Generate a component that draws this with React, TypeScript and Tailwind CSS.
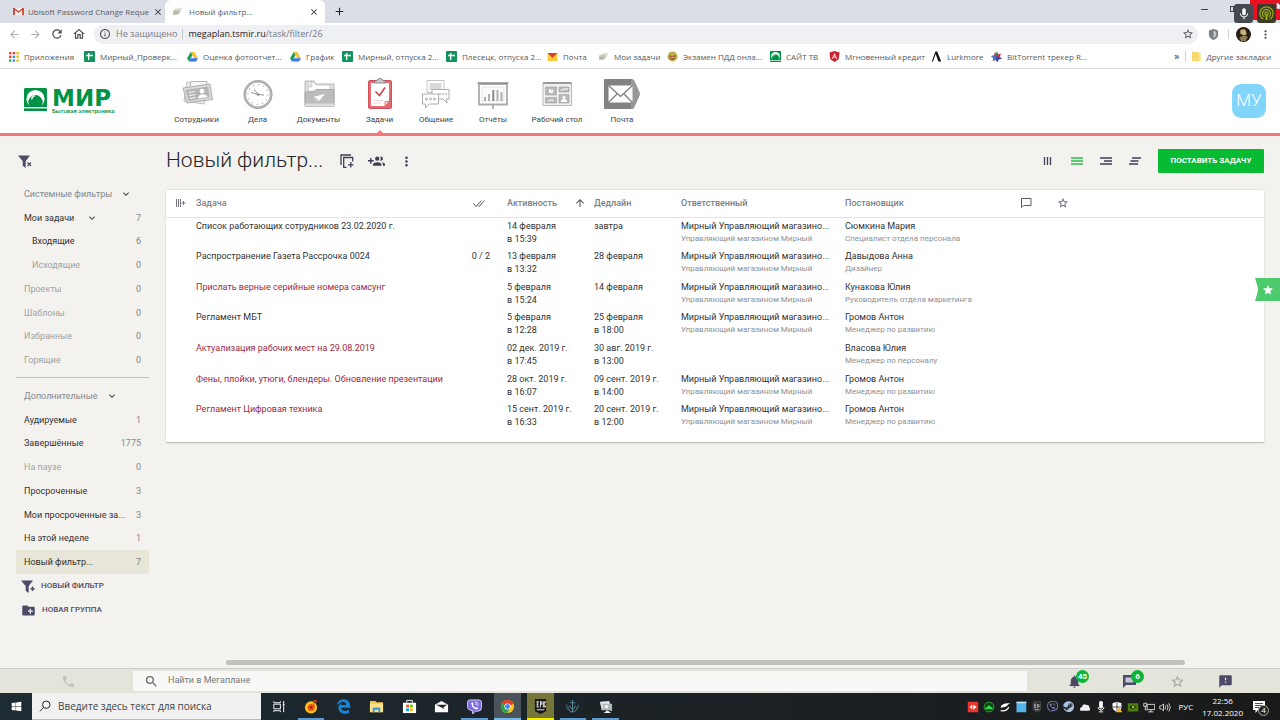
import React from "react";
import {
  MdArrowBack, MdArrowForward, MdRefresh, MdOutlineHome, MdInfoOutline, MdStarBorder, MdStar, MdMoreVert, MdClose, MdAdd,
  MdExpandMore, MdArrowUpward, MdPhone, MdSearch, MdNotifications, MdFeedback, MdCreateNewFolder, MdMic,
} from "react-icons/md";
import { FaWindows, FaEdgeLegacy, FaViber, FaSteam } from "react-icons/fa";

const chromeFont = "font-['Open_Sans','Noto_Sans',sans-serif]";

/* ---------- small coloured icons ---------- */

const Gmail = () => (
  <svg viewBox="0 0 12 10" className="h-[9px] w-[11px] shrink-0">
    <path d="M1 1h10v8H1z" fill="#f3f3f3" />
    <path d="M0 9V1h1.5L6 4.8 10.5 1H12v8h-2V3.4L6 6.6 2 3.4V9z" fill="#d23f31" />
  </svg>
);
const Papers = () => (
  <svg viewBox="0 0 12 12" className="size-[11px] shrink-0">
    <path d="M3 3l8-1-2 6-8 1z" fill="#dcdcd4" />
    <path d="M1 5l8-1-2 5-6 1z" fill="#c3c8b9" />
    <path d="M2 7h5M2 8.500h4" stroke="#9aa393" strokeWidth=".6" />
  </svg>
);
const AppsGrid = () => (
  <svg viewBox="0 0 10 10" className="size-[10px] shrink-0">
    {["#e94335", "#e94335", "#fbbc05", "#e94335", "#4285f4", "#fbbc05", "#34a853", "#4285f4", "#fbbc05"].map((c, i) => (
      <rect key={i} x={(i % 3) * 3.7} y={Math.floor(i / 3) * 3.7} width="2.400" height="2.400" fill={c} />
    ))}
  </svg>
);
const Sheet = () => (
  <svg viewBox="0 0 11 11" className="size-[11px] shrink-0">
    <rect width="11" height="11" rx="1" fill="#12945c" />
    <path d="M2 4.500h7M4.700 2v7" stroke="#fff" strokeWidth="1.300" />
  </svg>
);
const Drive = () => (
  <svg viewBox="0 0 12 11" className="h-[10px] w-[11px] shrink-0">
    <path d="M4 0h4l4 7H8z" fill="#fbc02d" />
    <path d="M4 0l2 3.500L2 10.500 0 7z" fill="#1e9e58" />
    <path d="M3.900 7H12l-2 3.500H2z" fill="#3b78e7" />
  </svg>
);
const YaMail = () => (
  <svg viewBox="0 0 11 9" className="h-[8px] w-[11px] shrink-0">
    <path d="M0 0h11v9H0z" fill="#fccb38" />
    <path d="M0 0h11L5.500 5.500z" fill="#e23b2e" />
  </svg>
);
const Emblem = () => (
  <svg viewBox="0 0 12 12" className="size-[11px] shrink-0">
    <circle cx="6" cy="6" r="5.500" fill="#c2ab50" />
    <path d="M3 4l3 2 3-2v4L6 10 3 8z" fill="#8a5a38" />
    <path d="M4 7h4" stroke="#e8d48a" />
  </svg>
);
const MirMark = ({ className }: { className: string }) => (
  <svg viewBox="0 0 24 24" className={className}>
    <path d="M1.500 0h21Q24 0 24 1.500V20H0V1.500Q0 0 1.500 0z" fill="#009245" />
    <circle cx="12" cy="11.500" r="9.500" fill="#fff" />
    <path d="M6.500 20a7.500 7.500 0 1 1 11 0z" fill="#009245" />
    <path d="M8 12a4.500 4.500 0 0 1 3.500-4" stroke="#fff" strokeWidth="1.300" fill="none" />
    <path d="M0 20h24v1.300H0z" fill="#fff" />
    <path d="M0 21.300h24V24H0z" fill="#009245" />
  </svg>
);
const Shield = () => (
  <svg viewBox="0 0 11 12" className="size-[11px] shrink-0">
    <path d="M5.500 0L11 1.500 10 9l-4.500 3L1 9 0 1.500z" fill="#cf2030" />
    <path d="M3.300 8.500L5.500 3l2.200 5.500M4.200 6.700h2.600" stroke="#fff" strokeWidth="1" fill="none" />
  </svg>
);
const Lambda = () => (
  <svg viewBox="0 0 11 11" className="size-[11px] shrink-0">
    <path d="M.8 10.500L4.400.5h1.800l4 10H7.400L4.700 3 2 10.500z" fill="#111" />
  </svg>
);
const Pinwheel = () => (
  <svg viewBox="0 0 12 12" className="size-[11px] shrink-0">
    <path d="M6.500 0l1 3.500 3.500-.5-1.500 3L12 8.500 8.500 9 7 12 5 9.500 2 11l.5-3.500L0 5.500l3.500-.8L4 1.500l2 1z" fill="#d22752" />
    <path d="M6.500 0l1 3.500L6 6 4 1.500l2 1z" fill="#21a34a" />
    <path d="M6 6L0 5.500l2.500 2L2 11l3-1.500z" fill="#2c7fe0" />
    <path d="M6 6l-1 3.500L7 12l1.500-3L12 8.500z" fill="#2e4ab0" />
  </svg>
);
const Folder = () => (
  <svg viewBox="0 0 10 12" className="h-[11px] w-[9px] shrink-0">
    <path d="M0 1h6l3 1v9H0z" fill="#f6d96f" />
    <path d="M8 2h2v9H8z" fill="#fbe9a0" />
  </svg>
);

/* ---------- browser chrome ---------- */

function TabStrip() {
  return (
    <div className="flex h-[23px] shrink-0 items-stretch bg-[#dbdee7] text-[8px] text-[#5a5d62]">
      <div className="flex w-[165px] items-center gap-[4px] pl-[13px]">
        <Gmail />
        <span className="whitespace-nowrap">Ubisoft Password Change Reque</span>
        <button aria-label="Закрыть вкладку" className="text-[#333]"><MdClose className="size-[10px]" /></button>
      </div>
      <div className="flex w-[160px] items-center gap-[6px] rounded-t-[6px] bg-white pr-[6px] pl-[7px]">
        <Papers />
        <span className="flex-1 whitespace-nowrap">Новый фильтр...</span>
        <button aria-label="Закрыть вкладку" className="text-[#333]"><MdClose className="size-[10px]" /></button>
      </div>
      <button aria-label="Новая вкладка" className="ml-[8px] text-[#222]"><MdAdd className="size-[13px]" /></button>
      <div className="ml-auto flex items-start">
        <button aria-label="Свернуть" className="mt-[9px] mr-[22px] h-px w-[7px] bg-[#444]" />
        <div className="mt-[6px] h-[6px] w-[4px] border border-[#444]" />
        <div className="relative z-10 mt-[4px] flex size-[19px] items-center justify-center rounded-[3px] bg-[#45484e] text-white">
          <MdMic className="size-[14px]" />
        </div>
        <div className="-ml-[3px] flex h-[20px] w-[30px] bg-[#e81123] pl-[7px]">
          <div className="mt-[4px] flex size-[19px] shrink-0 items-center justify-center rounded-[3px] bg-[#3d3a2c]">
            <svg viewBox="0 0 16 16" className="size-[15px]" fill="none" stroke="#a2b414" strokeWidth="1.200">
              <path d="M4.500 14A7 7 0 1 1 11.500 14M5.600 11.500a4.300 4.300 0 1 1 4.800 0" />
              <circle cx="8" cy="8" r="1.800" />
              <path d="M8 9v6" strokeWidth="2" />
            </svg>
          </div>
          <svg viewBox="0 0 6 12" className="h-[12px] w-[4px] shrink-0"><path d="M1 0v10l5 1V4z" fill="#fff" stroke="#222" strokeWidth=".5" /></svg>
        </div>
      </div>
    </div>
  );
}

function Toolbar() {
  return (
    <div className="flex h-[22px] shrink-0 items-center bg-white pl-[8px] text-[#4a4d52]">
      <div className="flex items-center gap-[8px]">
        <button aria-label="Назад" className="text-[#b0b2b5]"><MdArrowBack className="size-[13px]" /></button>
        <button aria-label="Вперёд" className="text-[#b0b2b5]"><MdArrowForward className="size-[13px]" /></button>
        <button aria-label="Обновить"><MdRefresh className="size-[14px]" /></button>
        <button aria-label="Домой"><MdOutlineHome className="size-[14px]" /></button>
      </div>
      <div className="ml-[8px] flex h-[19px] flex-1 items-center rounded-full bg-[#eff0f4] pr-[4px] pl-[5px] text-[9px]">
        <MdInfoOutline className="size-[12px]" />
        <span className="ml-[5px] text-[#777a7f]">Не защищено</span>
        <span className="mx-[5px] h-[10px] w-px bg-[#c4c6ca]" />
        <span className="flex-1 text-[#777a7f]"><span className="text-[#222]">megaplan.tsmir.ru</span>/task/filter/26</span>
        <button aria-label="В закладки"><MdStarBorder className="size-[12px]" /></button>
      </div>
      <svg viewBox="0 0 12 12" className="ml-[10px] size-[11px]">
        <path d="M6 0l5 1.500V6q0 4-5 6-5-2-5-6V1.500z" fill="#7b7e83" />
        <path d="M6 2l3 1v3q0 2-3 4z" fill="#c5c7ca" />
      </svg>
      <span className="ml-[9px] h-[10px] w-px bg-[#d0d2d6]" />
      <svg viewBox="0 0 14 14" className="ml-[7px] size-[15px]">
        <circle cx="7" cy="7" r="7" fill="#2b1d12" />
        <path d="M4 3q3-2 5 0l1 4-3 1-3-2z" fill="#c9b07a" />
        <path d="M3 10q4-3 8-1l-2 4H5z" fill="#8f7b5c" />
      </svg>
      <button aria-label="Меню браузера" className="mr-[8px] ml-[8px]"><MdMoreVert className="size-[13px]" /></button>
    </div>
  );
}

const bookmarks: { icon: React.ReactNode; text: string; w: string }[] = [
  { icon: <AppsGrid />, text: "Приложения", w: "w-[75px]" },
  { icon: <Sheet />, text: "Мирный_Проверк...", w: "w-[103px]" },
  { icon: <Drive />, text: "Оценка фотоотчет...", w: "w-[103px]" },
  { icon: <Drive />, text: "График", w: "w-[52px]" },
  { icon: <Sheet />, text: "Мирный, отпуска 2...", w: "w-[104px]" },
  { icon: <Sheet />, text: "Плесецк, отпуска 2...", w: "w-[101px]" },
  { icon: <YaMail />, text: "Почта", w: "w-[51px]" },
  { icon: <Papers />, text: "Мои задачи", w: "w-[69px]" },
  { icon: <Emblem />, text: "Экзамен ПДД онла...", w: "w-[103px]" },
  { icon: <MirMark className="size-[11px] shrink-0" />, text: "САЙТ ТВ", w: "w-[59px]" },
  { icon: <Shield />, text: "Мгновенный кредит", w: "w-[102px]" },
  { icon: <Lambda />, text: "Lurkmore", w: "w-[60px]" },
  { icon: <Pinwheel />, text: "BitTorrent трекер R...", w: "w-[100px]" },
];

function Bookmarks() {
  return (
    <div className="flex h-[24px] shrink-0 items-center border-b border-[#dcdcdc] bg-white pr-[9px] pl-[9px] text-[8px] whitespace-nowrap text-[#55585d]">
      {bookmarks.map((b) => (
        <a key={b.text} href="#" className={`flex shrink-0 items-center gap-[5px] ${b.w}`}>
          {b.icon}
          {b.text}
        </a>
      ))}
      <button className="ml-auto text-[10px] text-[#333]">»</button>
      <span className="mx-[6px] h-[11px] w-px bg-[#d0d2d6]" />
      <a href="#" className="flex items-center gap-[5px]"><Folder />Другие закладки</a>
    </div>
  );
}

/* ---------- application header ---------- */

const nav: { label: string; w: string; active?: boolean; icon: React.ReactNode }[] = [
  {
    label: "Сотрудники", w: "w-[61px]",
    icon: (
      <>
        <path d="M8 4l20 3-3 19L5 23z" fill="#efefef" stroke="#b0b0b0" strokeWidth=".8" />
        <path d="M12 3.500l16 0-1 6-17 3z" fill="#f7f7f7" stroke="#a5a5a5" strokeWidth=".8" />
        <path d="M4 10l27-4 2.500 15.500L8 25z" fill="#dadada" stroke="#a0a0a0" strokeWidth=".8" />
        <path d="M6.500 12l22.500-3.500 1.700 11L9.800 23z" fill="#b5b5b5" />
        <path d="M9.500 14.500l6.500-1M10 17.500l6.500-1M10.500 20.500l6.500-1" stroke="#f4f4f4" strokeWidth="1.200" />
        <circle cx="23" cy="13.200" r="2.400" fill="#fff" />
        <path d="M19 20.500q.5-4 4.500-4.200t5.200 2.800z" fill="#fff" />
      </>
    ),
  },
  {
    label: "Дела", w: "w-[61px]",
    icon: (
      <>
        <circle cx="18" cy="16.500" r="13" fill="#fff" stroke="#b5b5b5" strokeWidth="2.400" />
        <circle cx="18" cy="16.500" r="14.200" fill="none" stroke="#999" strokeWidth=".7" />
        <circle cx="18" cy="16.500" r="10" fill="none" stroke="#999" strokeWidth="1.200" strokeDasharray="1 4.236" />
        <path d="M11 14.500l7 2-4-5.500M18 16.500l6 .5" fill="none" stroke="#888" strokeWidth=".9" />
        <circle cx="18" cy="16.500" r="1.200" fill="#888" />
      </>
    ),
  },
  {
    label: "Документы", w: "w-[61px]",
    icon: (
      <>
        <path d="M4 28V3h9l2 3h18v22z" fill="#e2e2e2" stroke="#a8a8a8" strokeWidth=".8" />
        <path d="M7 4h6l2 3h14v6H7z" fill="#fff" stroke="#c0c0c0" strokeWidth=".8" />
        <path d="M7 9l4-5v5z" fill="#e4e4e4" stroke="#c0c0c0" strokeWidth=".6" />
        <path d="M4 14h9l2-2.500h18V28H4z" fill="#bcbcbc" stroke="#a0a0a0" strokeWidth=".8" />
        <path d="M4 25.500h29V28H4z" fill="#dcdcdc" />
        <path d="M12 19l12-3-6 7-2-2.500zM14.500 21.500l1.700 2v-2z" fill="#fff" />
      </>
    ),
  },
  {
    label: "Задачи", w: "w-[61px]", active: true,
    icon: (
      <>
        <rect x="6.500" y="2.500" width="23" height="28" rx="1.500" fill="#e36c72" stroke="#cf5059" />
        <path d="M9 5h18v18l-4 5H9z" fill="#fff" />
        <path d="M23 28v-4.500h4z" fill="#fbe3e3" stroke="#e0606a" strokeWidth=".8" />
        <path d="M13.500 13.500l4 4 5.500-8" fill="none" stroke="#d23f4d" strokeWidth="1.500" />
        <path d="M11 22.500h10M11 25h8" stroke="#e8cccc" strokeWidth=".8" />
        <path d="M12 5q0-2.500 3-2.500Q15.500.5 18 .5t3 2q3 0 3 2.500z" fill="#c9c9c9" stroke="#777" strokeWidth=".8" />
      </>
    ),
  },
  {
    label: "Общение", w: "w-[52px]",
    icon: (
      <>
        <path d="M9 2.500h17v12H9z" fill="#fff" stroke="#b5b5b5" strokeWidth=".8" />
        <path d="M11.500 5h12v7h-12z" fill="#d9d9d9" />
        <path d="M14 11.500h17V21h-2.500l.5 4-4-4H14z" fill="#fff" stroke="#a5a5a5" strokeWidth=".9" />
        <path d="M22 15v2M25 15v2M28 15v2" stroke="#999" strokeWidth="1.100" />
        <path d="M4.500 16h16v10H11l-3.500 4v-4h-3z" fill="#fff" stroke="#a5a5a5" strokeWidth=".9" />
        <g fill="none" stroke="#999" strokeWidth=".8"><circle cx="8.500" cy="21" r="1" /><circle cx="12.500" cy="21" r="1" /><circle cx="16.500" cy="21" r="1" /></g>
      </>
    ),
  },
  {
    label: "Отчёты", w: "w-[62px]",
    icon: (
      <>
        <path d="M4 6h28v20.500H4z" fill="#fff" stroke="#acacac" strokeWidth="1.800" />
        <path d="M2.500 5h31" stroke="#8b8b8b" strokeWidth="1.500" />
        <path d="M7 9h22v14H7z" fill="#fbfbfb" stroke="#d5d5d5" strokeWidth=".6" />
        <path d="M10 23v-4M14 23v-7M22.500 23v-11M26.500 23v-9" stroke="#b0b0b0" strokeWidth="2" />
        <path d="M18.300 23V12" stroke="#8a8a8a" strokeWidth="2" />
        <path d="M18 27v4" stroke="#999" strokeWidth="1.500" />
      </>
    ),
  },
  {
    label: "Рабочий стол", w: "w-[66px]",
    icon: (
      <>
        <path d="M4 5h28.500v22.500H4z" fill="#f0f0f0" stroke="#b0b0b0" strokeWidth=".9" />
        <path d="M4 5h28.500" stroke="#929292" strokeWidth="1.800" />
        <g fill="#b8b8b8" stroke="#a0a0a0" strokeWidth=".6">
          <path d="M6.500 9h11v8h-11zM20 9h10v5H20zM6.500 19.500h11V25h-11zM20 16.500h10V25H20z" />
        </g>
        <circle cx="12" cy="13" r="2.300" fill="#fff" />
        <path d="M12 13V10h3z" fill="#b8b8b8" />
        <path d="M22 12.500l3-1.500h4M9 23l3-1 3 1" stroke="#fff" fill="none" />
        <circle cx="25" cy="19.300" r="1.500" fill="#fff" />
        <path d="M22 24q0-3 3-3t3 3z" fill="#fff" />
      </>
    ),
  },
  {
    label: "Почта", w: "w-[64px]",
    icon: (
      <>
        <path d="M0 2q0-1 1-1h26q2 0 3 1.500L35.300 14q.7 2 0 4L30 29.500Q29 31 27 31H1q-1 0-1-1z" fill="#828282" />
        <path d="M27 1q2 0 3 1.500L35.300 14q.7 2 0 4L30 29.500Q29 31 27 31z" fill="#989898" />
        <path d="M4.500 7.500h24v17h-24z" fill="#fff" />
        <path d="M4.500 7.500l12 11 12-11M4.500 24.500l9-9M28.500 24.500l-9-9" fill="none" stroke="#777" strokeWidth="1.100" />
      </>
    ),
  },
];

function Header() {
  return (
    <header className="flex h-[67px] shrink-0 border-b-[3px] border-[#f37777] bg-white pr-[14px] pl-[24px]">
      <a href="#" aria-label="МИР" className="mt-[19px] flex w-[142px] gap-[5px] text-[#009245]">
        <MirMark className="size-[23px] shrink-0" />
        <span className="flex flex-col">
          <span className="font-['DejaVu_Sans',sans-serif] text-[23px] leading-[20px] font-bold">МИР</span>
          <span className="text-[6px] leading-[6px] font-medium whitespace-nowrap">Бытовая электроника</span>
        </span>
      </a>
      <nav className="flex">
        {nav.map((n) => (
          <a key={n.label} href="#" className={`relative flex flex-col items-center pt-[9px] text-[8px] whitespace-nowrap text-[#444] ${n.w}`}>
            <svg viewBox="0 0 36 32" className="h-[32px] w-[36px]">{n.icon}</svg>
            <span className="mt-[5px] leading-[10px]">{n.label}</span>
            {n.active && (
              <svg viewBox="0 0 6 3" className="absolute bottom-0 h-[3px] w-[6px]"><path d="M3 0l3 3H0z" fill="#f37777" /></svg>
            )}
          </a>
        ))}
      </nav>
      <button className="mt-[15px] ml-auto flex size-[34px] items-center justify-center rounded-[9px] bg-[#81d4fa] text-[17px] font-light text-white">МУ</button>
    </header>
  );
}

/* ---------- sidebar ---------- */

type Item = { label: string; count?: string; dim?: boolean; indent?: boolean; group?: boolean; arrow?: boolean; selected?: boolean };

const systemFilters: Item[] = [
  { label: "Системные фильтры", group: true, arrow: true },
  { label: "Мои задачи", count: "7", arrow: true },
  { label: "Входящие", count: "6", indent: true },
  { label: "Исходящие", count: "0", indent: true, dim: true },
  { label: "Проекты", count: "0", dim: true },
  { label: "Шаблоны", count: "0", dim: true },
  { label: "Избранные", count: "0", dim: true },
  { label: "Горящие", count: "0", dim: true },
];
const extraFilters: Item[] = [
  { label: "Дополнительные", group: true, arrow: true },
  { label: "Аудируемые", count: "1" },
  { label: "Завершённые", count: "1775" },
  { label: "На паузе", count: "0", dim: true },
  { label: "Просроченные", count: "3" },
  { label: "Мои просроченные за...", count: "3" },
  { label: "На этой неделе", count: "1" },
  { label: "Новый фильтр...", count: "7", selected: true },
];

function FilterGroup({ items }: { items: Item[] }) {
  return (
    <ul className="grid h-[190px] grid-cols-1 grid-rows-8">
      {items.map((it) => (
        <li key={it.label} className={`flex items-center pr-[8px] whitespace-nowrap ${it.indent ? "pl-[16px]" : "pl-[8px]"} ${it.selected ? "bg-[#e7e6d8]" : ""}`}>
          <a href="#" className={it.group ? "text-[#85898f]" : it.dim ? "text-[#a3a3a1]" : "text-[#333]"}>{it.label}</a>
          {it.arrow && <MdExpandMore className={`size-[12px] shrink-0 text-[#444] ${it.group ? "ml-[8px]" : "ml-[12px]"}`} />}
          <span className="ml-auto text-[#85878b]">{it.count}</span>
        </li>
      ))}
    </ul>
  );
}

const Funnel = ({ plus }: { plus?: boolean }) => (
  <svg viewBox="0 0 14 13" className="h-[13px] w-[14px]" fill="#4d4a68">
    <path d="M0 .5h12L7.700 6v7L4.700 10.800V6z" />
    {plus ? <path d="M9.500 8h1.300V6.500h1.400V8h1.500v1.400h-1.500V11h-1.400V9.400H9.500z" /> : <path d="M9.500 7.500l3.500 3.500M13 7.500L9.500 11" stroke="#4d4a68" strokeWidth="1.200" />}
  </svg>
);

function Sidebar() {
  return (
    <aside className="flex w-[150px] shrink-0 flex-col pr-px pl-[16px] text-[9px] leading-[14px]">
      <button aria-label="Сбросить фильтр" className="mt-[19px] ml-[2px] w-[14px]"><Funnel /></button>
      <div className="mt-[14px]"><FilterGroup items={systemFilters} /></div>
      <hr className="mt-[5px] mb-[6px] border-[#c4c4bf]" />
      <FilterGroup items={extraFilters} />
      <div className="flex flex-col pl-[5px] text-[8px] font-medium text-[#4d4a68]">
        <button className="flex h-[24px] items-center gap-[6px] whitespace-nowrap"><Funnel plus />НОВЫЙ ФИЛЬТР</button>
        <button className="flex h-[24px] items-center gap-[6px] whitespace-nowrap"><MdCreateNewFolder className="size-[15px]" />НОВАЯ ГРУППА</button>
      </div>
    </aside>
  );
}

/* ---------- task table ---------- */

const store = ["Мирный Управляющий магазино...", "Управляющий магазином Мирный"];
const rows: { task: string; late?: boolean; count?: string; act: string[]; due: string[]; resp?: string[]; by: string[] }[] = [
  { task: "Список работающих сотрудников 23.02.2020 г.", act: ["14 февраля", "в 15:39"], due: ["завтра"], resp: store, by: ["Сюмкина Мария", "Специалист отдела персонала"] },
  { task: "Распространение Газета Рассрочка 0024", count: "0 / 2", act: ["13 февраля", "в 13:32"], due: ["28 февраля"], resp: store, by: ["Давыдова Анна", "Дизайнер"] },
  { task: "Прислать верные серийные номера самсунг", late: true, act: ["5 февраля", "в 15:24"], due: ["14 февраля"], resp: store, by: ["Кунакова Юлия", "Руководитель отдела маркетинга"] },
  { task: "Регламент МБТ", act: ["5 февраля", "в 12:28"], due: ["25 февраля", "в 18:00"], resp: store, by: ["Громов Антон", "Менеджер по развитию"] },
  { task: "Актуализация рабочих мест на 29.08.2019", late: true, act: ["02 дек. 2019 г.", "в 17:45"], due: ["30 авг. 2019 г.", "в 13:00"], by: ["Власова Юлия", "Менеджер по персоналу"] },
  { task: "Фены, плойки, утюги, блендеры. Обновление презентации", late: true, act: ["28 окт. 2019 г.", "в 16:07"], due: ["09 сент. 2019 г.", "в 14:00"], resp: store, by: ["Громов Антон", "Менеджер по развитию"] },
  { task: "Регламент Цифровая техника", late: true, act: ["15 сент. 2019 г.", "в 16:33"], due: ["20 сент. 2019 г.", "в 12:00"], resp: store, by: ["Громов Антон", "Менеджер по развитию"] },
];

const Person = ({ data }: { data: string[] }) => (
  <>
    <div>{data[0]}</div>
    <div className="text-[8px] leading-[12px] text-[#8d9096]">{data[1]}</div>
  </>
);

function TaskTable() {
  return (
    <section className="rounded-[1px] border-b border-[#bdbdb9] bg-white pb-[10px] shadow-[0_0_2px_rgba(0,0,0,0.2)]">
      <table className="h-[242px] w-full table-fixed border-collapse text-left text-[9px] leading-[13px] whitespace-nowrap text-[#333]">
        <colgroup>
          <col className="w-[30px]" /><col className="w-[266px]" /><col className="w-[45px]" /><col className="w-[87px]" />
          <col className="w-[87px]" /><col className="w-[164px]" /><col className="w-[170px]" /><col className="w-[22px]" />
          <col className="w-[52px]" /><col />
        </colgroup>
        <thead>
          <tr className="h-[27px] border-b border-[#e4e4e4] text-[#7b7f86]">
            <th>
              <svg viewBox="0 0 10 10" className="ml-[10px] size-[10px]" stroke="#77797f" fill="none"><path d="M.5 1v8M2.500 1v8M4.500 1v8M5.500 5h4M7.500 3v4" /></svg>
            </th>
            <th className="font-medium">Задача</th>
            <th>
              <svg viewBox="0 0 12 10" className="ml-[11px] h-[10px] w-[12px]" stroke="#55585f" strokeWidth="1" fill="none"><path d="M.5 5.500L3 8.500l5.500-6M5 7.500l1 1 5.500-6" /></svg>
            </th>
            <th className="font-medium">
              <span className="flex items-center justify-between pr-[8px]">Активность <MdArrowUpward className="size-[12px] text-[#555]" /></span>
            </th>
            <th className="font-medium">Дедлайн</th>
            <th className="font-medium">Ответственный</th>
            <th className="font-medium">Постановщик</th>
            <th>
              <svg viewBox="0 0 12 12" className="ml-[5px] size-[12px]" stroke="#5b5970" fill="none"><path d="M1.500 10.500v-9h9.500v7H3.500z" /></svg>
            </th>
            <th className="pl-[20px]"><MdStarBorder className="size-[12px] text-[#5b5970]" /></th>
            <th />
          </tr>
        </thead>
        <tbody>
          {rows.map((r) => (
            <tr key={r.task} className="align-top">
              <td />
              <td className="pt-[2px]"><a href="#" className={r.late ? "text-[#a02b45]" : ""}>{r.task}</a></td>
              <td className="pt-[2px] pr-[17px] text-right">{r.count}</td>
              <td className="pt-[2px]">{r.act.map((l) => <div key={l}>{l}</div>)}</td>
              <td className="pt-[2px]">{r.due.map((l) => <div key={l}>{l}</div>)}</td>
              <td className="pt-[2px]">{r.resp && <Person data={r.resp} />}</td>
              <td className="pt-[2px]"><Person data={r.by} /></td>
              <td /><td /><td />
            </tr>
          ))}
        </tbody>
      </table>
    </section>
  );
}

function Content() {
  const icon = "#3f3d56";
  return (
    <main className="flex min-w-0 flex-1 flex-col pr-[16px] pl-[16px]">
      <div className="flex h-[54px] items-center pb-[4px] text-[#3f3d56]">
        <h1 className="text-[21px] font-light text-[#222]">Новый фильтр...</h1>
        <div className="ml-[17px] flex items-center gap-[14px]">
          <button aria-label="Копировать">
            <svg viewBox="0 0 14 14" className="size-[14px]" fill="none" stroke={icon} strokeWidth="1.300"><path d="M1 11V1h10M6.500 13.300H3.700V3.500h9v4M8 10.800h5.500M10.800 8v5.500" /></svg>
          </button>
          <button aria-label="Добавить участников">
            <svg viewBox="0 0 24 24" className="size-[17px]" fill={icon}>
              <path d="M8 10H5V7H3v3H0v2h3v3h2v-3h3v-2zM18 11a3 3 0 1 0-.91-5.860c.57.81.9 1.790.9 2.860s-.34 2.040-.9 2.860c.28.090.590.140.910.140zM13 11a3 3 0 1 0 0-6 3 3 0 0 0 0 6zM19.620 13.160c.830.730 1.380 1.660 1.380 2.840v2h3v-2c0-1.540-2.370-2.490-4.380-2.840zM13 13c-2 0-6 1-6 3v2h12v-2c0-2-4-3-6-3z" />
            </svg>
          </button>
          <button aria-label="Ещё"><MdMoreVert className="size-[15px]" /></button>
        </div>
        <div className="ml-auto flex items-center gap-[17px]">
          <button aria-label="Колонки"><svg viewBox="0 0 12 12" className="size-[12px]" stroke={icon} strokeWidth="1.300"><path d="M2.500 2v8M5.500 2v8M8.500 2v8" /></svg></button>
          <button aria-label="Список"><svg viewBox="0 0 12 12" className="size-[12px]" stroke="#2fb94d" strokeWidth="1.500"><path d="M0 3h12M0 6h12M0 9h12" /></svg></button>
          <button aria-label="Дерево"><svg viewBox="0 0 12 12" className="size-[12px]" stroke={icon} strokeWidth="1.300"><path d="M0 3h12M4 6h8M0 9h12" /></svg></button>
          <button aria-label="Диаграмма"><svg viewBox="0 0 12 12" className="size-[12px]" stroke={icon} strokeWidth="1.300"><path d="M3 3h9M1.500 6h8M0 9h9" /></svg></button>
        </div>
        <button className="ml-[17px] h-[24px] w-[106px] rounded-[1px] bg-[#07bb32] text-[8px] font-bold whitespace-nowrap text-white">ПОСТАВИТЬ ЗАДАЧУ</button>
      </div>
      <TaskTable />
    </main>
  );
}

/* ---------- bottom bar ---------- */

const Badge = ({ children }: { children: string }) => (
  <span className="absolute -top-[4px] left-[9px] flex size-[13px] items-center justify-center rounded-full bg-[#0bb537] text-[8px] leading-[13px] font-bold text-white">{children}</span>
);

function BottomBar() {
  return (
    <footer className="flex h-[25px] shrink-0 items-center border-t border-[#cfcfc9] bg-[#e4e4da] text-[#4d4a68]">
      <div className="flex w-[133px] justify-center pl-[3px] text-[#c3c3bb]"><MdPhone className="size-[15px]" /></div>
      <label className="flex h-[20px] flex-1 items-center gap-[9px] bg-[#f8f8f6] pl-[11px]">
        <MdSearch className="size-[15px] text-[#666]" />
        <input aria-label="Найти в Мегаплане" placeholder="Найти в Мегаплане" className="flex-1 bg-transparent text-[9px] outline-none placeholder:text-[#77787a]" />
      </label>
      <div className="flex w-[253px] items-center pl-[40px]">
        <button aria-label="Уведомления" className="relative w-[55px]"><MdNotifications className="size-[15px]" /><Badge>45</Badge></button>
        <button aria-label="Сообщения" className="relative w-[48px]">
          <svg viewBox="0 0 14 14" className="size-[14px]"><path d="M1 14V1h13v10H4z" fill="#4d4a68" /><path d="M3.500 3.500h8v5h-8z" fill="#c9c7d6" /></svg>
          <Badge>6</Badge>
        </button>
        <button aria-label="Избранное" className="w-[48px] text-[#a3a3a0]"><MdStarBorder className="size-[15px]" /></button>
        <button aria-label="Отзыв"><MdFeedback className="size-[15px]" /></button>
      </div>
    </footer>
  );
}

/* ---------- system taskbar ---------- */

const apps: { name: string; style?: string; icon: React.ReactNode }[] = [
  { name: "Представление задач", icon: <g fill="none" stroke="#fff"><path d="M3 5.500h7v5H3zM3 2.500v1.500h7V2.500M3 14v-1.500h7V14M13.500 2v12M12.500 6h2" /></g> },
  { name: "Яндекс Музыка", style: "border-[#5b9bd0]", icon: <><circle cx="7.500" cy="9" r="6.500" fill="#fcc419" /><circle cx="7.500" cy="9" r="3.800" fill="#f0531e" /><circle cx="7.500" cy="9" r="1.500" fill="#a1200e" /><path d="M10 7V1l4 .5-.5 2-2.500-.3V9z" fill="#e03326" /></> },
  { name: "Edge", icon: <FaEdgeLegacy size={16} color="#1784d8" /> },
  { name: "Проводник", icon: <><path d="M1 2h6l1 1.500h7V14H1z" fill="#f5c548" /><path d="M1 5h14v9H1z" fill="#fde08a" /><path d="M4 14V9h8v5h-2v-2.500H6V14z" fill="#3a9bdc" /></> },
  { name: "Магазин", icon: <><path d="M5 4V1.500h6V4" fill="none" stroke="#fff" /><path d="M1 4h14v11H1z" fill="#fff" /><path d="M4.500 6h3v3h-3z" fill="#f25022" /><path d="M8.500 6h3v3h-3z" fill="#7fba00" /><path d="M4.500 10h3v3h-3z" fill="#00a4ef" /><path d="M8.500 10h3v3h-3z" fill="#ffb900" /></> },
  { name: "Почта", icon: <><path d="M1 6l7-4 7 4v8H1z" fill="#fff" /><path d="M2 6h12l-4 3 1 2-4-2.500z" fill="#1c262b" /></> },
  { name: "Viber", style: "border-[#5b9bd0]", icon: <><path d="M3 1h10q2.500 0 2.500 3v5q0 4-4 4H9l-3 3v-3.500Q.5 12 .5 8V4q0-3 2.500-3z" fill="#7d6be0" stroke="#e8e4ff" strokeWidth=".9" /><path d="M4.500 4l1.500-.5 1 2-.7 1q.7 2 2.700 2.700l1-.7 2 1-.5 1.500Q5.500 11.500 4.500 4z" fill="#fff" /><path d="M8.500 3q3.500.3 3.500 4M8.500 5q1.500 0 1.500 2" stroke="#fff" strokeWidth=".8" fill="none" /></> },
  { name: "Chrome", style: "border-[#76b9ed] bg-[#4a5359]", icon: <><circle cx="8" cy="8" r="7" fill="#fbc116" /><path d="M8 8L1.900 4.500A7 7 0 0 1 14.100 4.500L14.500 5z" fill="#e33b2e" /><path d="M8 8L1.900 4.500A7 7 0 0 0 7.500 15l3-5z" fill="#28a350" /><circle cx="8" cy="8" r="3.300" fill="#fff" /><circle cx="8" cy="8" r="2.600" fill="#4285f4" /></> },
  { name: "Epic Games", style: "border-[#f5ef00] bg-[#74763a]", icon: <><path d="M2 0h12v13l-6 3-6-3z" fill="#181818" /><path d="M4.500 2.500v6M4 3h2.500M4.500 5.500h1.700M4 8.500h2.500M8 9V2.500M8 3h1.500v2.500H8M11 2.500V9M13.300 4V3h-1.300v5.500h1.300V7M4 11.500h8" stroke="#fff" strokeWidth=".9" fill="none" /></> },
  { name: "World of Warships", style: "border-[#5b9bd0]", icon: <g fill="none" stroke="#5f8ea1"><path d="M8 1v13M5 4h6M3 8q0 5 5 6 5-1 5-6M5 7q0 3 3 4 3-1 3-4" /><path d="M1.500 5q-1 4 2 7M14.500 5q1 4-2 7" stroke="#39555f" /></g> },
  { name: "Диалог", style: "border-[#5b9bd0]", icon: <><path d="M2 3l10-1 2 8-10 2z" fill="#dfe3e5" /><path d="M5 5h10v8l-3-1H5z" fill="#b0b8bc" /><path d="M6 15l4-3 4 3z" fill="#eee" /><circle cx="9" cy="8" r="2" fill="#e9edf0" /></> },
];

const tray: React.ReactNode[] = [
  <><path d="M1 1h14v14H1z" fill="#e8382e" /><path d="M3.500 8L7 5v6zM12.500 8L8.500 4.500v7z" fill="#fff" /></>,
  <><circle cx="8" cy="8" r="6.500" fill="#0f3d12" stroke="#28c940" /><path d="M3 11q0-3 2.500-3Q8 3 10.500 8 13 8 13 11z" fill="#2be04a" /></>,
  <><path d="M2 9q1-7 13-6-3 1-4 3t-9 3z" fill="#fff" /><path d="M2 13q9 1 11-5" stroke="#fff" strokeWidth="1.500" fill="none" /></>,
  <><path d="M2 1h13v14H2z" fill="#56b4ec" /><path d="M2 1h13v2H2z" fill="#bfe2f8" /></>,
  <><path d="M3 1h10v11l-5 3-5-3z" fill="#2b2b2b" stroke="#777" strokeWidth=".6" /><path d="M5 4v5M5 4h2M5 6.500h1.500M5 9h2M8.500 9V4M10.500 9V4M5 11.500h6" stroke="#ddd" /></>,
  <FaViber size={15} color="#8d83c9" />,
  <FaSteam size={15} color="#a9c4e8" />,
  <path d="M2 13q-2-4 2-5 1-5 5-3 5 0 5 4 2 3-1 4z" fill="#eee" />,
  <><rect x="5.500" y="0" width="5" height="10" rx="2" fill="#fff" /><path d="M4 8q0 4 4 4t4-4M8 12v3M5 14.500h6" stroke="#ddd" fill="none" strokeWidth="1.300" /></>,
  <><path d="M8 1l6 2v5q0 4-6 7-6-3-6-7V3z" fill="#fff" /><path d="M8 1v14M2 8h12" stroke="#222" /><path d="M11 8l4 7H7z" fill="#fdb827" /></>,
  <><path d="M1 3h14v11H1z" fill="#4f7a10" /><path d="M3 8q5-5 9 0-5 5-9 0z" fill="#1c2b08" /><circle cx="8" cy="8" r="1.600" fill="#8ccf1e" /></>,
  <g fill="none" stroke="#fff"><path d="M5.500 4.500h10v7h-10zM10.500 11.500v3M7 14.500h7M1 3h4v4H1zM3 7v5h2" /></g>,
  <g fill="none" stroke="#fff"><path d="M1 6.500h2L6 4v9L3 10.500H1zM8 6q2 2.500 0 5M10.500 4.500q3 4 0 8M13 3q4 5.500 0 11" /></g>,
];

function Taskbar() {
  return (
    <div className={`flex h-[27px] shrink-0 items-stretch bg-linear-to-r from-[#1d2b33] to-[#1a1a1a] text-white ${chromeFont}`}>
      <button aria-label="Пуск" className="flex w-[32px] items-center justify-center"><FaWindows className="size-[11px]" /></button>
      <label className="flex w-[229px] items-center gap-[7px] border-b border-[#bbb] bg-[#f1f1f1] pl-[7px]">
        <svg viewBox="0 0 12 12" className="size-[12px]" fill="none" stroke="#222"><circle cx="7.300" cy="4.700" r="3.700" /><path d="M4.600 7.400L1 11.300" /></svg>
        <input aria-label="Поиск" placeholder="Введите здесь текст для поиска" className="flex-1 bg-transparent text-[10px] outline-none placeholder:text-[#444]" />
      </label>
      <div className="grid w-[361px] grid-cols-11 pl-px">
        {apps.map((a) => (
          <button key={a.name} aria-label={a.name} className={`mx-[3px] flex items-center justify-center border-b-2 pt-px ${a.style ?? "border-transparent"}`}>
            <svg viewBox="0 0 16 16" className="size-[15px]">{a.icon}</svg>
          </button>
        ))}
      </div>
      <div className="ml-auto flex items-center text-[8px]">
        {tray.map((t, i) => (
          <span key={i} className="flex w-[16px] justify-center"><svg viewBox="0 0 16 16" className="size-[12px]">{t}</svg></span>
        ))}
        <span className="ml-[5px]">РУС</span>
        <div className="ml-[9px] text-center leading-[12px]"><div>22:56</div><div>17.02.2020</div></div>
        <button aria-label="Центр уведомлений" className="relative mr-[14px] ml-[10px] w-[13px]">
          <svg viewBox="0 0 12 12" className="size-[12px]"><path d="M0 0h12v9H5L2.500 12V9H0z" fill="#fff" /><path d="M2 2.500h8M2 4.500h8M2 6.500h6" stroke="#222" strokeWidth=".8" /></svg>
          <span className="absolute top-[4px] left-[5px] flex size-[11px] items-center justify-center rounded-full border border-[#aaa] bg-[#222] text-[8px]">4</span>
        </button>
      </div>
    </div>
  );
}

export default function App() {
  return (
    <div className="flex h-screen flex-col overflow-hidden bg-[#f3f2ee] font-[Roboto,'Noto_Sans',sans-serif]">
      <div className={chromeFont}>
        <TabStrip />
        <Toolbar />
        <Bookmarks />
      </div>
      <Header />
      <div className="relative flex min-h-0 flex-1">
        <Sidebar />
        <Content />
        <button aria-label="Избранное" className="absolute top-[142px] right-0 flex h-[23px] w-[25px] items-center justify-center">
          <svg viewBox="0 0 25 23" className="absolute inset-0 size-full"><path d="M0 0h25v23H0l3-10v-3z" fill="#4dca6b" /></svg>
          <MdStar className="relative size-[12px] text-white" />
        </button>
        <div className="absolute right-[95px] bottom-[3px] left-[226px] h-[5px] rounded-full bg-[#c1c1bd]" />
      </div>
      <BottomBar />
      <Taskbar />
    </div>
  );
}
